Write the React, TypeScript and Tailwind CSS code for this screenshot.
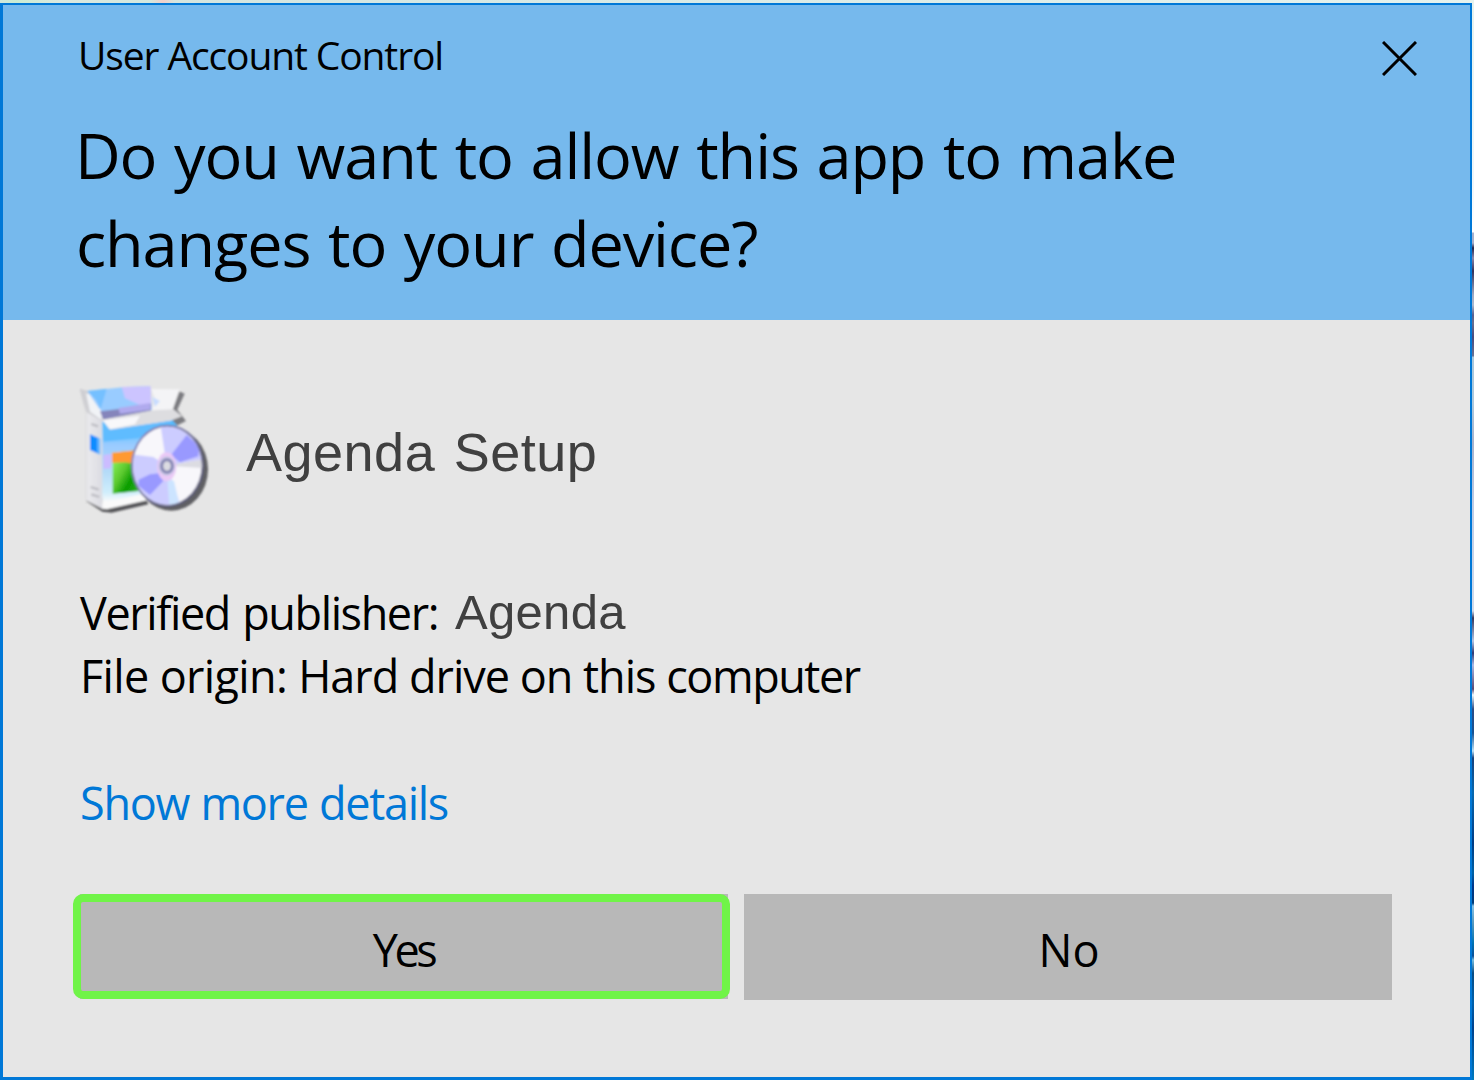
import React from "react";

function InstallerIcon() {
  return (
    <svg viewBox="0 0 450 450" className="h-[150px] w-[150px] shrink-0" aria-hidden="true">
      <defs>
        <linearGradient id="side" x1="0" y1="0" x2="1" y2="0">
          <stop offset="0" stopColor="#b9b9bb" />
          <stop offset=".35" stopColor="#e9e9ec" />
          <stop offset="1" stopColor="#dcdce2" />
        </linearGradient>
        <linearGradient id="front" x1="0" y1="0" x2="0" y2="1">
          <stop offset="0" stopColor="#48b4ff" />
          <stop offset=".15" stopColor="#66c6ff" />
          <stop offset=".3" stopColor="#9acbff" />
          <stop offset=".6" stopColor="#b5dcf8" />
          <stop offset=".82" stopColor="#d0eefc" />
          <stop offset=".92" stopColor="#fafafa" />
        </linearGradient>
        <linearGradient id="green" x1="0" y1="0" x2="1" y2="1">
          <stop offset="0" stopColor="#9aff66" />
          <stop offset=".45" stopColor="#5cc92f" />
          <stop offset=".7" stopColor="#0a9c00" />
          <stop offset="1" stopColor="#30b020" />
        </linearGradient>
        <linearGradient id="rim" x1="0" y1="0" x2="1" y2="1">
          <stop offset="0" stopColor="#8c8cc4" />
          <stop offset="1" stopColor="#50506c" />
        </linearGradient>
        <filter id="soft" x="-5%" y="-5%" width="110%" height="110%">
          <feGaussianBlur stdDeviation="3.5" />
        </filter>
        <clipPath id="disc">
          <ellipse cx="292" cy="272" rx="103" ry="117" />
        </clipPath>
      </defs>
      <g filter="url(#soft)">
        <path d="M48 378L97 410L125 413L235 388L225 365L60 370Z" fill="#555558" />
        <path d="M308 104L326 48L344 56L322 104L348 138L320 152L300 130Z" fill="#7c7c80" />
        <path d="M30 42L62 50L98 130L98 402L47 376L47 115Z" fill="url(#side)" />
        <path d="M30 42L62 50L97 108L97 138L50 112Z" fill="#cfcfd3" />
        <path d="M48 55L75 64L97 110L94 134L60 110Z" fill="#f1f3f6" />
        <path d="M97 140L300 128L320 150L320 345L225 375L97 402Z" fill="url(#front)" />
        <path d="M97 385L225 355L235 375L110 403L97 400Z" fill="#fafafa" />
        <path d="M52 48L165 36L240 34L246 106L108 122L86 98Z" fill="#99ccff" />
        <path d="M52 48L110 41L92 102L78 74Z" fill="#74c0ff" />
        <path d="M155 36L242 34L244 102L205 88L165 70Z" fill="#ccc4ff" />
        <path d="M90 109L180 98L242 86L242 108L100 134Z" fill="#8585bb" />
        <path d="M145 99L240 84L240 104L150 116Z" fill="#b0aaee" />
        <path d="M244 42L330 43L306 108L242 114L256 76Z" fill="#f4f4f6" />
        <path d="M246 65L270 78L255 95Z" fill="#c8dcff" />
        <path d="M97 134L248 106L310 103L336 124L300 138L120 166Z" fill="#dddde0" />
        <path d="M98 136L210 122L195 148L120 163Z" fill="#f8f8fa" />
        <path d="M100 152L120 164L300 138L300 150L205 190L100 200Z" fill="#5fbcff" />
        <path d="M60 178L88 190L88 238L60 225Z" fill="#0c8cff" />
        <path d="M82 187L91 192L91 239L82 235Z" fill="#69b9ff" />
        <path d="M64 147L84 154M62 336L86 344M64 358L88 366" stroke="#bcbcc2" strokeWidth="7" fill="none" />
        <path d="M100 240L124 237L124 280L100 282Z" fill="#ccbcff" />
        <path d="M128 233L205 225L205 348L128 356Z" fill="url(#green)" />
        <path d="M126 233L205 225L205 267L165 262L126 263Z" fill="#ff9933" />
        <ellipse cx="304" cy="283" rx="110" ry="124" fill="#45454a" opacity=".84" />
        <ellipse cx="292" cy="272" rx="109" ry="123" fill="url(#rim)" />
        <g clipPath="url(#disc)">
          <path d="M180 145H410V400H180Z" fill="#f8f7fb" />
          <path d="M290 272L270 140L350 140L415 175L415 250Z" fill="#ccccff" />
          <path d="M303 240L350 180L388 215L385 244L330 262Z" fill="#9999ff" />
          <path d="M290 272L415 250L415 280Z" fill="#dcdce2" />
          <path d="M290 272L335 400L240 410L170 330L160 235L250 246Z" fill="#ccccff" />
          <path d="M268 295L280 318L240 360L205 332L206 314L240 298Z" fill="#9999ff" />
          <path d="M292 310L298 395L328 388L312 318Z" fill="#cce4ff" />
        </g>
        <ellipse cx="290" cy="275" rx="29" ry="43" fill="#eac9f6" />
        <ellipse cx="290" cy="273" rx="25" ry="29" fill="#c8c8e6" />
        <ellipse cx="291" cy="273" rx="16" ry="19" fill="#dcdce2" stroke="#8585b4" strokeWidth="9" />
      </g>
    </svg>
  );
}

function Header() {
  return (
    <header className="flex h-[315px] shrink-0 justify-between bg-[#76b9ed] pl-[75px] pr-[53px] pt-[28px]">
      <div className="whitespace-nowrap">
        <p className="text-[39px] leading-[44px] tracking-[-1.12px]">User Account Control</p>
        <h1 className="-ml-[3px] mt-[34px] text-[63px] leading-[88px] tracking-[-1.1px] [word-spacing:2.4px]">
          Do you want to allow this app to make
          <br />
          <span className="ml-px">changes to your device?</span>
        </h1>
      </div>
      <button aria-label="Close" className="mt-[8px] h-[35px] w-[35px]">
        <svg viewBox="0 0 35 35" className="h-full w-full" fill="none" stroke="#000" strokeWidth="3">
          <path d="M1 1L34 34M34 1L1 34" />
        </svg>
      </button>
    </header>
  );
}

export default function App() {
  return (
    <div className="flex h-[1080px] w-[1474px] flex-col overflow-hidden font-['Open_Sans','Noto_Sans',sans-serif] text-black">
      <div className="h-[3px] shrink-0 bg-[linear-gradient(90deg,#cfe8dc_0px,#c9ecd4_15px,#dbe8df_60px,#d3e8df_150px,#f0cfca_163px,#d5e5df_175px,#d5e8e5_460px,#e5f2ee_1474px)]" />
      <div className="flex min-h-0 flex-1">
        <div className="flex w-[1472px] shrink-0 flex-col border-b-[3px] border-l-[3px] border-r-2 border-t-2 border-[#0078d7] bg-[#e6e6e6]">
          <Header />
          <main className="flex flex-col whitespace-nowrap">
            <div className="flex pl-[67px] pt-[55px]">
              <InstallerIcon />
              <h2 className="ml-[26px] mt-[46px] font-['Liberation_Sans',sans-serif] text-[54px] leading-[62px] tracking-[0.5px] text-[#404040] [word-spacing:3px]">
                Agenda Setup
              </h2>
            </div>
            <div className="mt-[57px] pl-[77px] text-[45px] leading-[62px]">
              <div className="flex">
                <span className="w-[360px] tracking-[-1.4px] [word-spacing:2px]">Verified publisher:</span>
                <span className="-mt-px ml-[15px] h-[62px] font-['Liberation_Sans',sans-serif] text-[49px] tracking-[0.3px] text-[#404040]">
                  Agenda
                </span>
              </div>
              <p className="mt-px tracking-[-1px]">
                <span className="tracking-[-0.65px]">File origin: </span>
                Hard drive on this <span className="tracking-[-1.45px]">computer</span>
              </p>
              <a href="#" className="mt-[65px] block w-fit tracking-[-1.3px] text-[#0078d7] [word-spacing:1px]">
                Show more details
              </a>
            </div>
            <div className="mt-[60px] flex gap-[14px] pl-[70px] text-[45px]">
              <button className="relative h-[105px] w-[657px] pl-[7px] pr-[2px]">
                <span className="flex h-full items-center justify-center bg-[#b8b8b8] pr-px pt-[7px] tracking-[-3.4px]">Yes</span>
                <span className="absolute inset-0 rounded-[10px] border-8 border-[#70f448]" />
              </button>
              <button className="h-[106px] w-[648px] bg-[#b8b8b8] pl-[2px] pt-[6px]">No</button>
            </div>
          </main>
        </div>
        <div className="w-[2px] bg-[linear-gradient(180deg,#e5f2ee_0px,#eef6fa_180px,#ffffff_229px,#a5b0cd_230px,#a5b0cd_240px,#20244c_245px,#8988ae_255px,#31325d_268px,#9da9c4_292px,#a8b9d0_302px,#555f91_312px,#666f91_320px,#464a80_334px,#667194_353px,#a8c7dc_354px,#adc9dd_400px,#a5b2cd_440px,#bdcbe5_500px,#d0dbeb_608px,#33375e_615px,#b3c5e5_638px,#2d3974_650px,#a9b8e5_662px,#584975_686px,#eef7fb_692px,#2c4c85_706px,#175292_730px,#bce2f7_748px,#17417c_755px,#0868ae_790px,#003b84_840px,#0061a4_870px,#00358a_883px,#003b78_900px,#87c1e4_903px,#5798bd_920px,#0072b2_940px,#0b4f97_953px,#76bddf_957px,#094c83_970px,#0060ab_1000px,#00418c_1025px,#0079bd_1077px)]" />
      </div>
    </div>
  );
}
